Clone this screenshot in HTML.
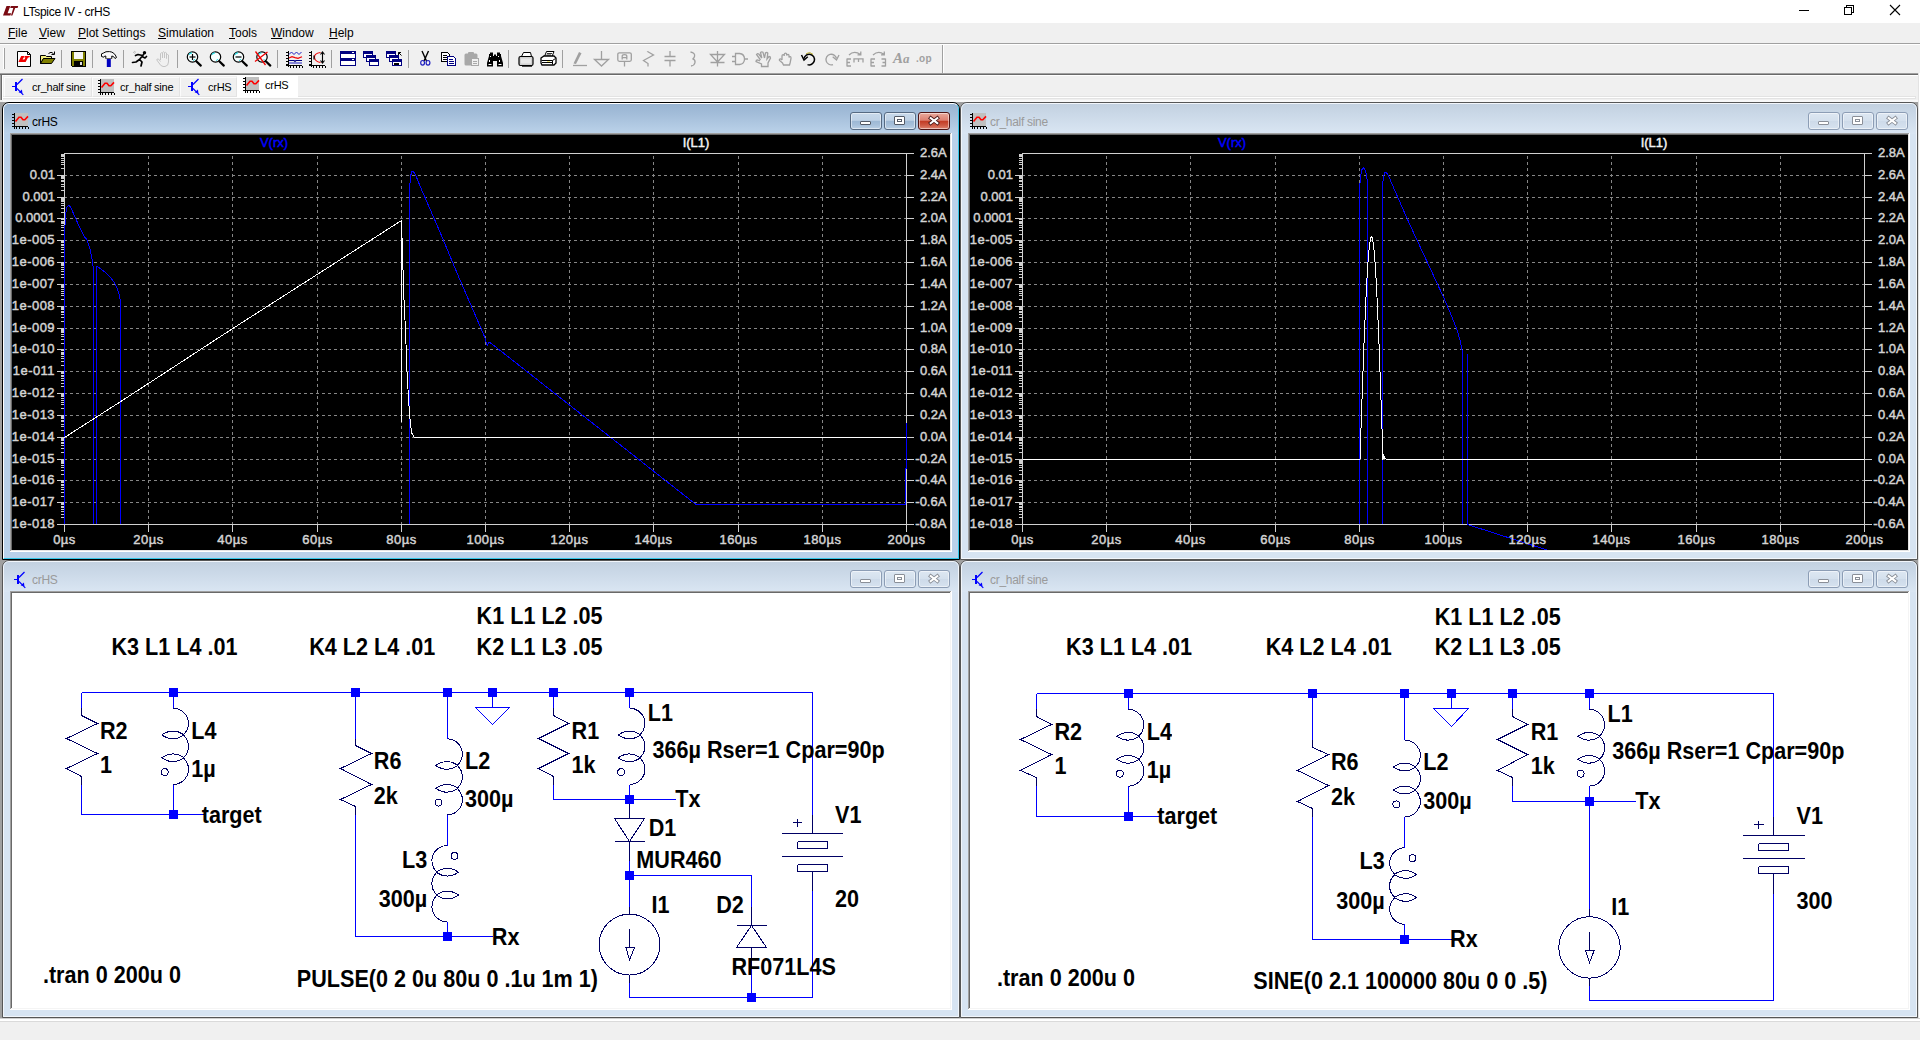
<!DOCTYPE html><html><head><meta charset="utf-8"><title>LTspice IV - crHS</title><style>
*{box-sizing:border-box;margin:0;padding:0}
html,body{width:1920px;height:1040px;overflow:hidden;background:#f0f0f0;font-family:"Liberation Sans",sans-serif;}
.abs{position:absolute}
.t{position:absolute;white-space:pre;line-height:1;}
.ui{font-size:12px;color:#000;}
.tab{font-size:11px;color:#000;letter-spacing:-0.25px}
.sch{font-size:21.4px;font-weight:bold;color:#000;transform:scaleY(1.07);transform-origin:50% 48%}
.pl{font-size:13px;font-weight:normal;color:#d4d4d4;-webkit-text-stroke:0.45px #d4d4d4}
u{text-decoration:underline;text-underline-offset:1px}
svg{position:absolute;left:0;top:0;overflow:visible}
</style></head><body>
<div class="abs" style="left:0px;top:0px;width:1920px;height:23px;background:#ffffff;"></div>
<svg width="1920" height="23" style="left:0;top:0"><g fill="#7a0a12"><path d="M6.5,6 L10.3,6 L7.6,13.2 L11.2,13.2 L10.4,15.6 L3,15.6 Z"/><path d="M10.8,6 L18.2,6 L17.6,8 L15.2,8 L12.4,15.6 L10.9,15.6 L11.6,13.6 L13.3,8 L10.2,8 Z"/></g><g stroke="#000" stroke-width="1" fill="none" shape-rendering="crispEdges"><path d="M1799,10.5 H1809"/><path d="M1844.5,7.5 H1851.5 V14.5 H1844.5 Z"/><path d="M1846.5,7.5 V5.5 H1853.5 V12.5 H1851.5"/></g><g stroke="#000" stroke-width="1.1" fill="none"><path d="M1890,5 L1900,15 M1900,5 L1890,15"/></g></svg>
<div class="t ui" style="left:23px;top:6px;letter-spacing:-0.28px">LTspice IV - crHS</div>
<div class="abs" style="left:0px;top:23px;width:1920px;height:20px;background:#f0f0f0;"></div>
<div class="t ui" style="left:8px;top:27px;"><u>F</u>ile</div>
<div class="t ui" style="left:39px;top:27px;"><u>V</u>iew</div>
<div class="t ui" style="left:78px;top:27px;"><u>P</u>lot Settings</div>
<div class="t ui" style="left:158px;top:27px;"><u>S</u>imulation</div>
<div class="t ui" style="left:229px;top:27px;"><u>T</u>ools</div>
<div class="t ui" style="left:271px;top:27px;"><u>W</u>indow</div>
<div class="t ui" style="left:329px;top:27px;"><u>H</u>elp</div>
<div class="abs" style="left:0px;top:43px;width:1920px;height:1px;background:#a0a0a0;"></div>
<div class="abs" style="left:0px;top:44px;width:1920px;height:1px;background:#ffffff;"></div>
<div class="abs" style="left:0px;top:45px;width:1920px;height:28px;background:#f0f0f0;"></div>
<div class="abs" style="left:0px;top:73px;width:1918px;height:1px;background:#a0a0a0;"></div>
<div class="abs" style="left:0px;top:74px;width:1918px;height:1px;background:#696969;"></div>
<div class="abs" style="left:3px;top:48px;width:1px;height:21px;background:#ffffff;"></div>
<div class="abs" style="left:4px;top:48px;width:1px;height:21px;background:#a0a0a0;"></div>
<div class="abs" style="left:61px;top:50px;width:1px;height:18px;background:#a0a0a0;"></div>
<div class="abs" style="left:92px;top:50px;width:1px;height:18px;background:#a0a0a0;"></div>
<div class="abs" style="left:123px;top:50px;width:1px;height:18px;background:#a0a0a0;"></div>
<div class="abs" style="left:177px;top:50px;width:1px;height:18px;background:#a0a0a0;"></div>
<div class="abs" style="left:277px;top:50px;width:1px;height:18px;background:#a0a0a0;"></div>
<div class="abs" style="left:331px;top:50px;width:1px;height:18px;background:#a0a0a0;"></div>
<div class="abs" style="left:408px;top:50px;width:1px;height:18px;background:#a0a0a0;"></div>
<div class="abs" style="left:508px;top:50px;width:1px;height:18px;background:#a0a0a0;"></div>
<div class="abs" style="left:562px;top:50px;width:1px;height:18px;background:#a0a0a0;"></div>
<div class="abs" style="left:942px;top:45px;width:1px;height:28px;background:#a0a0a0;"></div>
<div class="abs" style="left:943px;top:45px;width:1px;height:28px;background:#ffffff;"></div>
<svg width="1920" height="80"><g transform="translate(17,51)" ><path d="M0.5,0.5 H10.5 L13.5,3.5 V15.5 H0.5 Z" fill="#fff" stroke="#000"/><path d="M10.5,0.5 V3.5 H13.5" fill="none" stroke="#000"/><path d="M4.2,5 L7.6,5 L5.6,8.6 L8.2,8.6 L7,11 L1.4,11 Z" fill="#f00000"/><path d="M8,5 L13,5 L12.2,6.6 L11,6.6 L8.6,11 L6.2,11 L8.4,6.6 L7.2,6.6 Z" fill="#f00000"/></g><g transform="translate(40,51)" ><path d="M0.5,4.5 H5.5 L6.5,5.5 H11.5 V7.5 H3.5 L0.5,12.5 Z" fill="#f4f080" stroke="#000"/><path d="M0.5,12.5 L3.5,7.5 H15 L11.5,12.5 Z" fill="#808000" stroke="#000"/><path d="M8.5,2.5 Q11,0 13.5,2.5 M14.5,0.5 V3.5 H11.5" fill="none" stroke="#000"/></g><g transform="translate(71,51)" shape-rendering="crispEdges"><path d="M0.5,0.5 H14.5 V15.5 H1.5 L0.5,14.5 Z" fill="#808000" stroke="#000"/><rect x="3" y="1" width="9" height="7" fill="#f8f8f8"/><rect x="3" y="10" width="9" height="5" fill="#000"/><rect x="9" y="11" width="2" height="3" fill="#e0e0e0"/></g><g transform="translate(100,51)" ><path d="M1.5,5.5 Q0.5,2 3.5,2 Q5.5,0.2 9.5,0.6 Q14.5,1 16.5,6.5 L15,7.5 Q13.5,4.8 11.8,5 L11.8,7.5 L5.8,7.5 L5.8,5 Q4.5,4.6 3.8,6.2 Z" fill="#f8f8f8" stroke="#000" stroke-width="1"/><rect x="6.8" y="8" width="4" height="8" fill="#0000c0"/><path d="M6,7.5 H11.6" stroke="#606060"/></g><g transform="translate(132,51)" ><circle cx="12.5" cy="1.8" r="1.7" fill="#000"/><path d="M11.5,3.5 L7.5,8.5 M10.5,4.5 L6,3.5 L3.5,4.5 M10,5.5 L13,7 L14.5,5.5 M7.5,8.5 L4,11 L0.5,11.5 M7.5,8.5 L10,11 L9,15" fill="none" stroke="#000" stroke-width="1.7" stroke-linecap="round" stroke-linejoin="round"/><path d="M1,1 L3,2.5 M2,0 L4,1.5" stroke="#b0b0b0" stroke-width="0.8"/></g><g transform="translate(156,51)" ><path d="M4.5,9 V2.5 Q5.5,1 6.5,2.5 V7 V1.5 Q7.5,0 8.5,1.5 V7 V2 Q9.5,0.8 10.5,2 V7.5 V4 Q11.5,3 12.5,4 V11 Q12.5,15 9,15.5 H7 Q4.5,15 3,12 L0.8,9 Q0.8,7.5 2.5,8 L4.5,10.5" fill="none" stroke="#c4c4c4" stroke-width="1"/></g><circle cx="192.5" cy="57" r="5.2" fill="#f8ffff" stroke="#000" stroke-width="1.2"/><path d="M188.9,54.6 A4.2,4.2 0 0 1 192.0,52.8" stroke="#30e0e8" stroke-width="1.2" fill="none"/><path d="M195.1,59.0 A4.2,4.2 0 0 1 193.0,60.6" stroke="#30e0e8" stroke-width="1" fill="none"/><path d="M196.3,61.2 L200.8,65.6" stroke="#000" stroke-width="2.2" stroke-linecap="round"/><path d="M189.5,57 H195.5" stroke="#000" stroke-width="1.2"/><path d="M192.5,54 V60" stroke="#000" stroke-width="1.2"/><circle cx="215.5" cy="57" r="5.2" fill="#f8ffff" stroke="#000" stroke-width="1.2"/><path d="M211.9,54.6 A4.2,4.2 0 0 1 215.0,52.8" stroke="#30e0e8" stroke-width="1.2" fill="none"/><path d="M218.1,59.0 A4.2,4.2 0 0 1 216.0,60.6" stroke="#30e0e8" stroke-width="1" fill="none"/><path d="M219.3,61.2 L223.8,65.6" stroke="#000" stroke-width="2.2" stroke-linecap="round"/><circle cx="238.5" cy="57" r="5.2" fill="#f8ffff" stroke="#000" stroke-width="1.2"/><path d="M234.9,54.6 A4.2,4.2 0 0 1 238.0,52.8" stroke="#30e0e8" stroke-width="1.2" fill="none"/><path d="M241.1,59.0 A4.2,4.2 0 0 1 239.0,60.6" stroke="#30e0e8" stroke-width="1" fill="none"/><path d="M242.3,61.2 L246.8,65.6" stroke="#000" stroke-width="2.2" stroke-linecap="round"/><path d="M235.5,57 H241.5" stroke="#000" stroke-width="1.2"/><circle cx="262" cy="57" r="5.2" fill="#f8ffff" stroke="#000" stroke-width="1.2"/><path d="M258.4,54.6 A4.2,4.2 0 0 1 261.5,52.8" stroke="#30e0e8" stroke-width="1.2" fill="none"/><path d="M264.6,59.0 A4.2,4.2 0 0 1 262.5,60.6" stroke="#30e0e8" stroke-width="1" fill="none"/><path d="M265.8,61.2 L270.3,65.6" stroke="#000" stroke-width="2.2" stroke-linecap="round"/><path d="M255.5,51.5 L265.5,65 M267.5,52 L255,61.5" stroke="#f00000" stroke-width="1.3"/><g transform="translate(286,51)" ><g shape-rendering="crispEdges"><rect x="2" y="0" width="1" height="16" fill="#000"/><rect x="0" y="14" width="16" height="1" fill="#000"/><rect x="0" y="1" width="2" height="1" fill="#000"/><rect x="0" y="4" width="2" height="1" fill="#000"/><rect x="0" y="7" width="2" height="1" fill="#000"/><rect x="0" y="10" width="2" height="1" fill="#000"/><rect x="0" y="13" width="2" height="1" fill="#000"/><rect x="4" y="15" width="1" height="1.5" fill="#000"/><rect x="7" y="15" width="1" height="1.5" fill="#000"/><rect x="10" y="15" width="1" height="1.5" fill="#000"/><rect x="13" y="15" width="1" height="1.5" fill="#000"/><rect x="16" y="15" width="1" height="1.5" fill="#000"/></g><path d="M3,3.5 L5.5,1 L8,3.5 L10.5,1 L13,3.5 L15.5,1" fill="none" stroke="#2020c0" stroke-width="1"/><path d="M3,7 L6,5.6 L9,6.6 L12,7.4 L16,5.8" fill="none" stroke="#f00000" stroke-width="1.2"/><path d="M3,9.5 H8 L9,10.5 L10,9.5 H16" fill="none" stroke="#000080" stroke-width="1.1"/><path d="M3,12 H16" stroke="#2020c0" stroke-width="1"/></g><g transform="translate(309,51)" ><g shape-rendering="crispEdges"><rect x="2" y="0" width="1" height="16" fill="#000"/><rect x="0" y="14" width="16" height="1" fill="#000"/><rect x="0" y="1" width="2" height="1" fill="#000"/><rect x="0" y="4" width="2" height="1" fill="#000"/><rect x="0" y="7" width="2" height="1" fill="#000"/><rect x="0" y="10" width="2" height="1" fill="#000"/><rect x="0" y="13" width="2" height="1" fill="#000"/><rect x="4" y="15" width="1" height="1.5" fill="#000"/><rect x="7" y="15" width="1" height="1.5" fill="#000"/><rect x="10" y="15" width="1" height="1.5" fill="#000"/><rect x="13" y="15" width="1" height="1.5" fill="#000"/><rect x="16" y="15" width="1" height="1.5" fill="#000"/></g><path d="M11.5,1.5 Q5,2.5 5.5,6.5 Q6,10.5 11.5,11.5" fill="none" stroke="#f00000" stroke-width="1.1"/><path d="M13.5,1.5 V11.5 M11.5,3.5 L13.5,1 L15.5,3.5 M11.5,9.5 L13.5,12 L15.5,9.5" fill="none" stroke="#000" stroke-width="1.1"/><path d="M5,4.5 V8.5" stroke="#000" stroke-width="1.2"/></g><g transform="translate(340,51)" shape-rendering="crispEdges"><rect x="0.5" y="0.5" width="15" height="7" fill="#fff" stroke="#000080"/><rect x="1" y="1" width="14" height="2" fill="#000080"/><rect x="0.5" y="7.5" width="15" height="7" fill="#fff" stroke="#000080"/><rect x="1" y="8" width="14" height="2" fill="#000080"/><rect x="12" y="1" width="2" height="1" fill="#fff"/><rect x="12" y="8" width="2" height="1" fill="#fff"/></g><g transform="translate(363,51)" shape-rendering="crispEdges"><rect x="0.5" y="0.5" width="9" height="6" fill="#fff" stroke="#000080"/><rect x="1" y="1" width="8" height="2" fill="#000080"/><rect x="3.5" y="4.5" width="9" height="6" fill="#fff" stroke="#000080"/><rect x="4" y="5" width="8" height="2" fill="#000080"/><rect x="6.5" y="8.5" width="9" height="6" fill="#fff" stroke="#000080"/><rect x="7" y="9" width="8" height="2" fill="#000080"/></g><g transform="translate(386,51)" shape-rendering="crispEdges"><rect x="0.5" y="0.5" width="9" height="6" fill="#fff" stroke="#000080"/><rect x="1" y="1" width="8" height="2" fill="#000080"/><rect x="3.5" y="4.5" width="9" height="6" fill="#fff" stroke="#000080"/><rect x="4" y="5" width="8" height="2" fill="#000080"/><rect x="6.5" y="8.5" width="9" height="6" fill="#fff" stroke="#000080"/><rect x="7" y="9" width="8" height="2" fill="#000080"/><rect x="8" y="12" width="5" height="1.5" fill="#000"/></g><g transform="translate(386,51)" ><path d="M15.5,4.5 L12.5,1.5 M12.5,4 V1.5 H15" fill="none" stroke="#000" stroke-width="1"/></g><g transform="translate(420,51)" ><path d="M2,0 L6.5,10 M8.5,0 L4,10" stroke="#000" stroke-width="1.4" fill="none"/><ellipse cx="2.6" cy="11.8" rx="1.9" ry="2.3" fill="none" stroke="#2020c0" stroke-width="1.2"/><ellipse cx="8" cy="11.8" rx="1.9" ry="2.3" fill="none" stroke="#2020c0" stroke-width="1.2"/></g><g transform="translate(441,51)" shape-rendering="crispEdges"><path d="M0.5,1.5 H6.5 L8.5,3.5 V10.5 H0.5 Z" fill="#fff" stroke="#000"/><path d="M2,4.5 H6 M2,6.5 H7 M2,8.5 H7" stroke="#000"/><path d="M6.5,5.5 H12.5 L14.5,7.5 V14.5 H6.5 Z" fill="#fff" stroke="#000080"/><path d="M8,8.5 H12 M8,10.5 H13 M8,12.5 H13" stroke="#000080"/></g><g transform="translate(464,51)" ><rect x="0.5" y="2.5" width="13" height="12" rx="1.5" fill="#a8a8a8"/><rect x="4" y="1" width="6" height="3" rx="1" fill="#a8a8a8"/><rect x="7.5" y="7.5" width="7" height="7" fill="#f0f0f0" stroke="#a8a8a8"/><path d="M9,10.5 H13 M9,12.5 H13" stroke="#a8a8a8"/></g><g transform="translate(487,51)" ><path d="M2,3 H6 V5 H7 V3.5 H9 V5 H10 V3 H14 V5 L16,12 V15.5 H10 V10 H6 V15.5 H0 V12 L2,5 Z" fill="#000"/><rect x="3" y="1.5" width="3" height="2" fill="#000"/><rect x="10" y="1.5" width="3" height="2" fill="#000"/><rect x="3" y="5" width="1" height="1" fill="#fff"/><rect x="11" y="5" width="1" height="1" fill="#fff"/><rect x="2" y="9" width="1" height="2" fill="#fff"/><rect x="12" y="9" width="1" height="2" fill="#fff"/><rect x="1.5" y="13" width="3" height="1" fill="#fff"/><rect x="11.5" y="13" width="3" height="1" fill="#fff"/></g><g transform="translate(518,51)" ><path d="M3.5,5.5 L5.5,1.5 H12.5 L13.5,5.5" fill="#fff" stroke="#000"/><rect x="1" y="5.5" width="14" height="9" rx="1.5" fill="#d0d0d0" stroke="#000" stroke-width="1.2"/><rect x="3" y="7.5" width="10" height="5" fill="#e8e8e8"/><path d="M4,15 H14" stroke="#000" stroke-width="1.4"/></g><g transform="translate(540,51)" ><path d="M4.5,5.5 L6.5,0.5 H14 L12,5.5 Z" fill="#fff" stroke="#000"/><path d="M7,2.5 H12 M6.5,4 H11" stroke="#000" stroke-width="0.8"/><path d="M1,7 L4,5 H14 L16,7 V12 L14,14 H2 L1,12 Z" fill="#fff" stroke="#000" stroke-width="1.3"/><path d="M1.5,9.5 H12.5 L15.5,7.5 M12.5,9.5 V13.5" stroke="#000" fill="none"/><rect x="7" y="10.5" width="3" height="1.5" fill="#e8d800"/><path d="M2,11.5 H12" stroke="#000"/></g><g transform="translate(572,51)" ><path d="M1,14.5 H15" stroke="#a0a0a0" fill="none" stroke-width="1.3"/><path d="M1.5,12.5 L7,1 L9.5,2.2 L4,13 Z" fill="#a0a0a0"/></g><g transform="translate(594,51)" ><path d="M7.5,0 V8 M0.5,8.5 H14.5 L7.5,15 Z" stroke="#a0a0a0" fill="none" stroke-width="1.3"/></g><g transform="translate(617,51)" ><rect x="0.8" y="1.8" width="13.5" height="8.5" rx="1.5" stroke="#a0a0a0" fill="none" stroke-width="1.3"/><path d="M7.5,10.5 V15.5" stroke="#a0a0a0" fill="none" stroke-width="1.3"/><path d="M5.2,8.5 V5 Q5.2,3.6 7.5,3.6 Q9.8,3.6 9.8,5 V8.5 M5.2,6.6 H9.8" stroke="#a0a0a0" fill="none" stroke-width="1.3" stroke-width="1.4"/></g><g transform="translate(642,51)" ><path d="M5.5,0.5 L11.5,4 L1.5,9.5 L6,12.5 V15.5" stroke="#a0a0a0" fill="none" stroke-width="1.3"/><path d="M5.5,0.5 V1" stroke="#a0a0a0" fill="none" stroke-width="1.3"/></g><g transform="translate(664,51)" ><path d="M6,0 V5.5 M0.5,5.5 H11.5 M0.5,9.5 H11.5 M6,9.5 V15.5" stroke="#a0a0a0" fill="none" stroke-width="1.3" stroke-width="1.4"/></g><g transform="translate(689,51)" ><path d="M1.5,1 Q6.5,2 5.5,5.5 Q5,7.5 3.5,7.8 Q6.5,8.5 6,11.5 Q5.5,14.5 2,15" stroke="#a0a0a0" fill="none" stroke-width="1.3" stroke-width="1.4"/></g><g transform="translate(710,51)" ><path d="M7.5,0 V15.5 M0.5,3.5 H14.5 L7.5,11 Z M0.5,11.5 H14.5" stroke="#a0a0a0" fill="none" stroke-width="1.3"/></g><g transform="translate(732,51)" ><path d="M0,5.5 H3.5 M0,10.5 H3.5 M3.5,2.5 H7.5 Q12.5,3 12.5,8 Q12.5,13 7.5,13.5 H3.5 Z M12.5,8 H16" stroke="#a0a0a0" fill="none" stroke-width="1.3" stroke-width="1.5"/></g><g transform="translate(755,51)" ><path d="M5.5,9 L1.5,3.5 Q2.5,2 3.8,3 L6.8,7 L5.5,1.5 Q6.8,0.3 8,1.3 L9.5,7 L10.5,1.8 Q12,1 12.8,2.2 L12,8 L14,5.5 Q15.5,5.5 15.5,7 L13,12 V15.5 H6.5 V13 L1,10.5 Q1,9 2.5,9 L5,10" stroke="#a0a0a0" fill="none" stroke-width="1.3" stroke-width="1"/></g><g transform="translate(778,51)" ><path d="M4,9 V5 Q4,3.6 5.2,3.6 Q6.2,3.6 6.2,5 V3.5 Q6.4,2.2 7.5,2.2 Q8.6,2.2 8.7,3.5 V4.5 Q9,3.2 10,3.3 Q11,3.4 11,4.8 V6.5 Q11.4,5.4 12.3,5.6 Q13.2,5.8 13,7.5 L12.2,11.5 L11.5,14 H5.5 L4.5,12 L1.5,9.5 Q1,7.8 2.5,7.8 L4,9" stroke="#a0a0a0" fill="none" stroke-width="1.3" stroke-width="1.1"/></g><g transform="translate(801,51)" ><path d="M3,7.5 A5.3,5.3 0 1 1 6.5,13.6" fill="none" stroke="#000" stroke-width="1.5"/><path d="M0.5,4 L3,9 L6.8,5.8" fill="none" stroke="#000" stroke-width="1.5"/><path d="M5.2,2.6 A5.3,5.3 0 0 1 12,3.4" fill="none" stroke="#b0a000" stroke-width="0.8"/></g><g transform="translate(824,51)" ><path d="M12.5,7.5 A5.3,5.3 0 1 0 9,13.6" stroke="#a0a0a0" fill="none" stroke-width="1.3"/><path d="M15,4 L12.5,9 L8.7,5.8" stroke="#a0a0a0" fill="none" stroke-width="1.3"/></g><g transform="translate(846,51)" ><path d="M1,15.5 V7.5 M1,8 H5 M1,11.5 H4 M1,15 H5" stroke="#a0a0a0" fill="none" stroke-width="1.3" stroke-width="1.5"/><path d="M8,11.5 V7.8 H17 V11.5 M12.5,8 V11" stroke="#a0a0a0" fill="none" stroke-width="1.3" stroke-width="1.5"/><path d="M3,4 Q8,-1 14.5,3.5 M14.8,0.5 V3.8 H11.5" stroke="#a0a0a0" fill="none" stroke-width="1.3" stroke-width="1"/></g><g transform="translate(870,51)" ><path d="M1,15.5 V7.5 M1,8 H5 M1,11.5 H4 M1,15 H5" stroke="#a0a0a0" fill="none" stroke-width="1.3" stroke-width="1.5"/><path d="M15.5,15.5 V7.5 M15.5,8 H11.5 M15.5,11.5 H12.5 M15.5,15 H11.5" stroke="#a0a0a0" fill="none" stroke-width="1.3" stroke-width="1.5"/><path d="M3,4 Q8.5,-1 14,3.5 M14.3,0.5 V3.8 H11" stroke="#a0a0a0" fill="none" stroke-width="1.3" stroke-width="1"/></g></svg>
<div class="t ui" style="left:893px;top:51px;font-family:'Liberation Serif',serif;font-style:italic;font-weight:bold;font-size:15px;color:#a0a0a0">A<span style="font-size:13px">a</span></div>
<div class="t ui" style="left:916px;top:54px;font-weight:bold;font-size:10px;color:#a0a0a0;letter-spacing:0.3px">.op</div>
<div class="abs" style="left:0px;top:75px;width:1920px;height:25px;background:#f0f0f0;"></div>
<div class="abs" style="left:0px;top:75px;width:1918px;height:1px;background:#ffffff;"></div>
<div class="abs" style="left:0px;top:75px;width:1px;height:25px;background:#a0a0a0;"></div>
<div class="abs" style="left:1px;top:75px;width:1px;height:25px;background:#696969;"></div>
<div class="abs" style="left:2px;top:75px;width:1px;height:25px;background:#ffffff;"></div>
<div class="abs" style="left:3px;top:96px;width:1913px;height:3px;background:#e3e3e3;"></div>
<div class="abs" style="left:3px;top:97px;width:1912px;height:1px;background:#ffffff;"></div>
<div class="abs" style="left:3px;top:100px;width:1915px;height:2px;background:#f8f8f8;"></div>
<div class="abs" style="left:1918px;top:73px;width:1px;height:945px;background:#e3e3e3;"></div>
<div class="abs" style="left:1919px;top:73px;width:1px;height:945px;background:#ffffff;"></div>
<div class="abs" style="left:4px;top:77px;width:88px;height:20px;background:#f0f0f0;border:1px solid #e3e3e3;border-left-color:#fbfbfb;border-top-color:#fbfbfb"></div>
<div class="t tab" style="left:32px;top:82px;">cr_half sine</div>
<div class="abs" style="left:92px;top:77px;width:88px;height:20px;background:#f0f0f0;border:1px solid #e3e3e3;border-left-color:#fbfbfb;border-top-color:#fbfbfb"></div>
<div class="t tab" style="left:120px;top:82px;">cr_half sine</div>
<div class="abs" style="left:180px;top:77px;width:57px;height:20px;background:#f0f0f0;border:1px solid #e3e3e3;border-left-color:#fbfbfb;border-top-color:#fbfbfb"></div>
<div class="t tab" style="left:208px;top:82px;">crHS</div>
<div class="abs" style="left:237px;top:76px;width:61px;height:22px;background:#ffffff;"></div>
<div class="t tab" style="left:265px;top:80px;">crHS</div>
<svg width="1920" height="1040"><g transform="translate(12,79)" fill="#0000ff" shape-rendering="crispEdges"><rect x="0" y="7" width="4" height="1"/><rect x="3" y="3" width="2" height="9"/></g><g transform="translate(12,79)" stroke="#0000ff" fill="#0000ff"><path d="M5,5.5 L10.5,0" stroke-width="1.15"/><path d="M5,9.5 L11.3,15.8" stroke-width="1.15"/><path d="M6.6,13.6 L9.9,10.4 L10.4,14.1 Z" stroke="none"/></g><g transform="translate(98,79)" shape-rendering="crispEdges"><rect x="3" y="0" width="13" height="13" fill="#c0c0c0"/><rect x="2" y="0" width="1" height="16" fill="#000"/><rect x="0" y="13" width="16" height="1" fill="#000"/><rect x="0" y="1" width="2" height="1" fill="#000"/><rect x="0" y="4" width="2" height="1" fill="#000"/><rect x="0" y="7" width="2" height="1" fill="#000"/><rect x="0" y="10" width="2" height="1" fill="#000"/><rect x="0" y="13" width="2" height="1" fill="#000"/><rect x="4" y="14" width="1" height="2" fill="#000"/><rect x="7" y="14" width="1" height="2" fill="#000"/><rect x="10" y="14" width="1" height="2" fill="#000"/><rect x="13" y="14" width="1" height="2" fill="#000"/><rect x="16" y="14" width="1" height="2" fill="#000"/></g><g transform="translate(98,79)"><path d="M3.5,8.5 L7,4.2 L9,4.2 L11,6.8 L12.8,6.8 L16,3.4" stroke="#ff0000" stroke-width="1.6" fill="none"/></g><g transform="translate(188,79)" fill="#0000ff" shape-rendering="crispEdges"><rect x="0" y="7" width="4" height="1"/><rect x="3" y="3" width="2" height="9"/></g><g transform="translate(188,79)" stroke="#0000ff" fill="#0000ff"><path d="M5,5.5 L10.5,0" stroke-width="1.15"/><path d="M5,9.5 L11.3,15.8" stroke-width="1.15"/><path d="M6.6,13.6 L9.9,10.4 L10.4,14.1 Z" stroke="none"/></g><g transform="translate(243,77)" shape-rendering="crispEdges"><rect x="3" y="0" width="13" height="13" fill="#c0c0c0"/><rect x="2" y="0" width="1" height="16" fill="#000"/><rect x="0" y="13" width="16" height="1" fill="#000"/><rect x="0" y="1" width="2" height="1" fill="#000"/><rect x="0" y="4" width="2" height="1" fill="#000"/><rect x="0" y="7" width="2" height="1" fill="#000"/><rect x="0" y="10" width="2" height="1" fill="#000"/><rect x="0" y="13" width="2" height="1" fill="#000"/><rect x="4" y="14" width="1" height="2" fill="#000"/><rect x="7" y="14" width="1" height="2" fill="#000"/><rect x="10" y="14" width="1" height="2" fill="#000"/><rect x="13" y="14" width="1" height="2" fill="#000"/><rect x="16" y="14" width="1" height="2" fill="#000"/></g><g transform="translate(243,77)"><path d="M3.5,8.5 L7,4.2 L9,4.2 L11,6.8 L12.8,6.8 L16,3.4" stroke="#ff0000" stroke-width="1.6" fill="none"/></g></svg>
<div class="abs" style="left:0px;top:102px;width:1918px;height:916px;background:#a0a0a0;"></div>
<div class="abs" style="left:0px;top:1018px;width:1920px;height:22px;background:#f0f0f0;"></div>
<div class="abs" style="left:0px;top:1018px;width:1920px;height:1px;background:#d0d0d0;"></div>
<div class="abs" style="left:0px;top:1019px;width:1920px;height:2px;background:#ffffff;"></div>
<div class="abs" style="left:0px;top:1021px;width:1920px;height:1px;background:#dadada;"></div>
<div class="abs" style="left:2px;top:102px;width:958px;height:458px;background:#b9d1ea;border:1px solid #000000;border-radius:7px 7px 0 0;overflow:hidden"><div class="abs" style="left:0;top:0;width:956px;height:456px;border:1px solid #ffffff;border-radius:6px 6px 0 0;border-right-color:#35c6e8;border-bottom-color:#35c6e8;"></div><div class="abs" style="left:1px;top:1px;width:954px;height:30px;background:linear-gradient(#98b4d2 0px,#a3bdd9 10px,#bcd3ea 30px,#b9d1ea 31px);border-radius:5px 5px 0 0"></div></div>
<div class="abs" style="left:10px;top:133px;width:942px;height:419px;background:#ffffff;"></div>
<div class="abs" style="left:10px;top:133px;width:941px;height:418px;background:#a0a0a0;"></div>
<div class="abs" style="left:11px;top:134px;width:940px;height:417px;background:#e3e3e3;"></div>
<div class="abs" style="left:11px;top:134px;width:939px;height:416px;background:#696969;"></div>
<div class="abs" style="left:12px;top:135px;width:938px;height:415px;background:#000000;"></div>
<svg width="1920" height="1040"><g transform="translate(12,113)" shape-rendering="crispEdges"><rect x="3" y="0" width="13" height="13" fill="#c0c0c0"/><rect x="2" y="0" width="1" height="16" fill="#000"/><rect x="0" y="13" width="16" height="1" fill="#000"/><rect x="0" y="1" width="2" height="1" fill="#000"/><rect x="0" y="4" width="2" height="1" fill="#000"/><rect x="0" y="7" width="2" height="1" fill="#000"/><rect x="0" y="10" width="2" height="1" fill="#000"/><rect x="0" y="13" width="2" height="1" fill="#000"/><rect x="4" y="14" width="1" height="2" fill="#000"/><rect x="7" y="14" width="1" height="2" fill="#000"/><rect x="10" y="14" width="1" height="2" fill="#000"/><rect x="13" y="14" width="1" height="2" fill="#000"/><rect x="16" y="14" width="1" height="2" fill="#000"/></g><g transform="translate(12,113)"><path d="M3.5,8.5 L7,4.2 L9,4.2 L11,6.8 L12.8,6.8 L16,3.4" stroke="#ff0000" stroke-width="1.6" fill="none"/></g></svg>
<div class="t ui" style="left:32px;top:116px;color:#000;letter-spacing:-0.3px">crHS</div>
<div class="abs" style="left:850px;top:112px;width:32px;height:18px;border:1px solid #566a82;border-radius:3px;background:linear-gradient(#c8d9ea 0%,#bfd2e6 46%,#9db8d4 50%,#a7c0da 75%,#bcd1e6 100%);box-shadow:inset 0 0 0 1px rgba(255,255,255,0.5)"></div>
<div class="abs" style="left:884px;top:112px;width:32px;height:18px;border:1px solid #566a82;border-radius:3px;background:linear-gradient(#c8d9ea 0%,#bfd2e6 46%,#9db8d4 50%,#a7c0da 75%,#bcd1e6 100%);box-shadow:inset 0 0 0 1px rgba(255,255,255,0.5)"></div>
<div class="abs" style="left:918px;top:112px;width:32px;height:18px;border:1px solid #4d1414;border-radius:3px;background:linear-gradient(#e9a99c 0%,#dc7f70 46%,#c23a24 50%,#cd5640 75%,#dd8370 100%);box-shadow:inset 0 0 0 1px rgba(255,255,255,0.5)"></div>
<svg width="1920" height="1040"><rect x="860.5" y="121.5" width="10" height="3" fill="#fff" stroke="#535a66" rx="0.5"/><rect x="894.5" y="116.5" width="10" height="8" fill="#fff" stroke="#535a66" rx="0.5"/><rect x="897.5" y="119.5" width="4" height="2" fill="none" stroke="#535a66"/><path d="M930.7,118.1 L937.3,123.1 M937.3,118.1 L930.7,123.1" stroke="#4a1a1a" stroke-width="3.8" stroke-linecap="square"/><path d="M930.7,118.1 L937.3,123.1 M937.3,118.1 L930.7,123.1" stroke="#fff" stroke-width="2.0" stroke-linecap="square"/></svg>
<div class="abs" style="left:960px;top:102px;width:958px;height:458px;background:#d7e4f2;border:1px solid #565656;border-radius:7px 7px 0 0;overflow:hidden"><div class="abs" style="left:0;top:0;width:956px;height:456px;border:1px solid #f2f6fb;border-radius:6px 6px 0 0;"></div><div class="abs" style="left:1px;top:1px;width:954px;height:30px;background:linear-gradient(#c3d1e0 0px,#cad8e7 10px,#dae6f3 30px,#d7e4f2 31px);border-radius:5px 5px 0 0"></div></div>
<div class="abs" style="left:968px;top:133px;width:942px;height:419px;background:#ffffff;"></div>
<div class="abs" style="left:968px;top:133px;width:941px;height:418px;background:#a0a0a0;"></div>
<div class="abs" style="left:969px;top:134px;width:940px;height:417px;background:#e3e3e3;"></div>
<div class="abs" style="left:969px;top:134px;width:939px;height:416px;background:#696969;"></div>
<div class="abs" style="left:970px;top:135px;width:938px;height:415px;background:#000000;"></div>
<svg width="1920" height="1040"><g transform="translate(970,113)" shape-rendering="crispEdges"><rect x="3" y="0" width="13" height="13" fill="#c0c0c0"/><rect x="2" y="0" width="1" height="16" fill="#000"/><rect x="0" y="13" width="16" height="1" fill="#000"/><rect x="0" y="1" width="2" height="1" fill="#000"/><rect x="0" y="4" width="2" height="1" fill="#000"/><rect x="0" y="7" width="2" height="1" fill="#000"/><rect x="0" y="10" width="2" height="1" fill="#000"/><rect x="0" y="13" width="2" height="1" fill="#000"/><rect x="4" y="14" width="1" height="2" fill="#000"/><rect x="7" y="14" width="1" height="2" fill="#000"/><rect x="10" y="14" width="1" height="2" fill="#000"/><rect x="13" y="14" width="1" height="2" fill="#000"/><rect x="16" y="14" width="1" height="2" fill="#000"/></g><g transform="translate(970,113)"><path d="M3.5,8.5 L7,4.2 L9,4.2 L11,6.8 L12.8,6.8 L16,3.4" stroke="#ff0000" stroke-width="1.6" fill="none"/></g></svg>
<div class="t ui" style="left:990px;top:116px;color:#9a9a9a;letter-spacing:-0.3px">cr_half sine</div>
<div class="abs" style="left:1808px;top:112px;width:32px;height:18px;border:1px solid #8c9db5;border-radius:3px;background:linear-gradient(#dde7f2 0%,#d4e0ed 50%,#cddae9 51%,#d6e2ef 100%);box-shadow:inset 0 0 0 1px rgba(255,255,255,0.5)"></div>
<div class="abs" style="left:1842px;top:112px;width:32px;height:18px;border:1px solid #8c9db5;border-radius:3px;background:linear-gradient(#dde7f2 0%,#d4e0ed 50%,#cddae9 51%,#d6e2ef 100%);box-shadow:inset 0 0 0 1px rgba(255,255,255,0.5)"></div>
<div class="abs" style="left:1876px;top:112px;width:32px;height:18px;border:1px solid #8c9db5;border-radius:3px;background:linear-gradient(#dde7f2 0%,#d4e0ed 50%,#cddae9 51%,#d6e2ef 100%);box-shadow:inset 0 0 0 1px rgba(255,255,255,0.5)"></div>
<svg width="1920" height="1040"><rect x="1818.5" y="121.5" width="10" height="3" fill="#fff" stroke="#8a8f98" rx="0.5"/><rect x="1852.5" y="116.5" width="10" height="8" fill="#fff" stroke="#8a8f98" rx="0.5"/><rect x="1855.5" y="119.5" width="4" height="2" fill="none" stroke="#8a8f98"/><path d="M1888.7,118.1 L1895.3,123.1 M1895.3,118.1 L1888.7,123.1" stroke="#8a8f98" stroke-width="3.8" stroke-linecap="square"/><path d="M1888.7,118.1 L1895.3,123.1 M1895.3,118.1 L1888.7,123.1" stroke="#fff" stroke-width="2.0" stroke-linecap="square"/></svg>
<div class="abs" style="left:2px;top:560px;width:958px;height:458px;background:#d7e4f2;border:1px solid #565656;border-radius:7px 7px 0 0;overflow:hidden"><div class="abs" style="left:0;top:0;width:956px;height:456px;border:1px solid #f2f6fb;border-radius:6px 6px 0 0;"></div><div class="abs" style="left:1px;top:1px;width:954px;height:30px;background:linear-gradient(#c3d1e0 0px,#cad8e7 10px,#dae6f3 30px,#d7e4f2 31px);border-radius:5px 5px 0 0"></div></div>
<div class="abs" style="left:10px;top:591px;width:942px;height:419px;background:#ffffff;"></div>
<div class="abs" style="left:10px;top:591px;width:941px;height:418px;background:#a0a0a0;"></div>
<div class="abs" style="left:11px;top:592px;width:940px;height:417px;background:#f4f4f4;"></div>
<div class="abs" style="left:11px;top:592px;width:939px;height:416px;background:#696969;"></div>
<div class="abs" style="left:12px;top:593px;width:938px;height:415px;background:#ffffff;"></div>
<svg width="1920" height="1040"><g transform="translate(14,572)" fill="#0000ff" shape-rendering="crispEdges"><rect x="0" y="7" width="4" height="1"/><rect x="3" y="3" width="2" height="9"/></g><g transform="translate(14,572)" stroke="#0000ff" fill="#0000ff"><path d="M5,5.5 L10.5,0" stroke-width="1.15"/><path d="M5,9.5 L11.3,15.8" stroke-width="1.15"/><path d="M6.6,13.6 L9.9,10.4 L10.4,14.1 Z" stroke="none"/></g></svg>
<div class="t ui" style="left:32px;top:574px;color:#9a9a9a;letter-spacing:-0.3px">crHS</div>
<div class="abs" style="left:850px;top:570px;width:32px;height:18px;border:1px solid #8c9db5;border-radius:3px;background:linear-gradient(#dde7f2 0%,#d4e0ed 50%,#cddae9 51%,#d6e2ef 100%);box-shadow:inset 0 0 0 1px rgba(255,255,255,0.5)"></div>
<div class="abs" style="left:884px;top:570px;width:32px;height:18px;border:1px solid #8c9db5;border-radius:3px;background:linear-gradient(#dde7f2 0%,#d4e0ed 50%,#cddae9 51%,#d6e2ef 100%);box-shadow:inset 0 0 0 1px rgba(255,255,255,0.5)"></div>
<div class="abs" style="left:918px;top:570px;width:32px;height:18px;border:1px solid #8c9db5;border-radius:3px;background:linear-gradient(#dde7f2 0%,#d4e0ed 50%,#cddae9 51%,#d6e2ef 100%);box-shadow:inset 0 0 0 1px rgba(255,255,255,0.5)"></div>
<svg width="1920" height="1040"><rect x="860.5" y="579.5" width="10" height="3" fill="#fff" stroke="#8a8f98" rx="0.5"/><rect x="894.5" y="574.5" width="10" height="8" fill="#fff" stroke="#8a8f98" rx="0.5"/><rect x="897.5" y="577.5" width="4" height="2" fill="none" stroke="#8a8f98"/><path d="M930.7,576.1 L937.3,581.1 M937.3,576.1 L930.7,581.1" stroke="#8a8f98" stroke-width="3.8" stroke-linecap="square"/><path d="M930.7,576.1 L937.3,581.1 M937.3,576.1 L930.7,581.1" stroke="#fff" stroke-width="2.0" stroke-linecap="square"/></svg>
<div class="abs" style="left:960px;top:560px;width:958px;height:458px;background:#d7e4f2;border:1px solid #565656;border-radius:7px 7px 0 0;overflow:hidden"><div class="abs" style="left:0;top:0;width:956px;height:456px;border:1px solid #f2f6fb;border-radius:6px 6px 0 0;"></div><div class="abs" style="left:1px;top:1px;width:954px;height:30px;background:linear-gradient(#c3d1e0 0px,#cad8e7 10px,#dae6f3 30px,#d7e4f2 31px);border-radius:5px 5px 0 0"></div></div>
<div class="abs" style="left:968px;top:591px;width:942px;height:419px;background:#ffffff;"></div>
<div class="abs" style="left:968px;top:591px;width:941px;height:418px;background:#a0a0a0;"></div>
<div class="abs" style="left:969px;top:592px;width:940px;height:417px;background:#f4f4f4;"></div>
<div class="abs" style="left:969px;top:592px;width:939px;height:416px;background:#696969;"></div>
<div class="abs" style="left:970px;top:593px;width:938px;height:415px;background:#ffffff;"></div>
<svg width="1920" height="1040"><g transform="translate(972,572)" fill="#0000ff" shape-rendering="crispEdges"><rect x="0" y="7" width="4" height="1"/><rect x="3" y="3" width="2" height="9"/></g><g transform="translate(972,572)" stroke="#0000ff" fill="#0000ff"><path d="M5,5.5 L10.5,0" stroke-width="1.15"/><path d="M5,9.5 L11.3,15.8" stroke-width="1.15"/><path d="M6.6,13.6 L9.9,10.4 L10.4,14.1 Z" stroke="none"/></g></svg>
<div class="t ui" style="left:990px;top:574px;color:#9a9a9a;letter-spacing:-0.3px">cr_half sine</div>
<div class="abs" style="left:1808px;top:570px;width:32px;height:18px;border:1px solid #8c9db5;border-radius:3px;background:linear-gradient(#dde7f2 0%,#d4e0ed 50%,#cddae9 51%,#d6e2ef 100%);box-shadow:inset 0 0 0 1px rgba(255,255,255,0.5)"></div>
<div class="abs" style="left:1842px;top:570px;width:32px;height:18px;border:1px solid #8c9db5;border-radius:3px;background:linear-gradient(#dde7f2 0%,#d4e0ed 50%,#cddae9 51%,#d6e2ef 100%);box-shadow:inset 0 0 0 1px rgba(255,255,255,0.5)"></div>
<div class="abs" style="left:1876px;top:570px;width:32px;height:18px;border:1px solid #8c9db5;border-radius:3px;background:linear-gradient(#dde7f2 0%,#d4e0ed 50%,#cddae9 51%,#d6e2ef 100%);box-shadow:inset 0 0 0 1px rgba(255,255,255,0.5)"></div>
<svg width="1920" height="1040"><rect x="1818.5" y="579.5" width="10" height="3" fill="#fff" stroke="#8a8f98" rx="0.5"/><rect x="1852.5" y="574.5" width="10" height="8" fill="#fff" stroke="#8a8f98" rx="0.5"/><rect x="1855.5" y="577.5" width="4" height="2" fill="none" stroke="#8a8f98"/><path d="M1888.7,576.1 L1895.3,581.1 M1895.3,576.1 L1888.7,581.1" stroke="#8a8f98" stroke-width="3.8" stroke-linecap="square"/><path d="M1888.7,576.1 L1895.3,581.1 M1895.3,576.1 L1888.7,581.1" stroke="#fff" stroke-width="2.0" stroke-linecap="square"/></svg>
<svg width="938" height="415" style="left:12px;top:135px;overflow:hidden" viewBox="12 135 938 415"><g shape-rendering="crispEdges" fill="none"><path d="M148.5,154 V524 M232.5,154 V524 M317.5,154 V524 M401.5,154 V524 M485.5,154 V524 M569.5,154 V524 M653.5,154 V524 M738.5,154 V524 M822.5,154 V524 " stroke="#868686" stroke-dasharray="3 3" stroke-dashoffset="-2"/><path d="M65,175.5 H906 M65,197.5 H906 M65,218.5 H906 M65,240.5 H906 M65,262.5 H906 M65,284.5 H906 M65,306.5 H906 M65,328.5 H906 M65,349.5 H906 M65,371.5 H906 M65,393.5 H906 M65,415.5 H906 M65,437.5 H906 M65,459.5 H906 M65,480.5 H906 M65,502.5 H906 " stroke="#868686" stroke-dasharray="3 3" stroke-dashoffset="1"/><rect x="64.5" y="153.5" width="842" height="371" stroke="#d0d0d0"/><path d="M64.5,524 V532 M148.5,524 V532 M232.5,524 V532 M317.5,524 V532 M401.5,524 V532 M485.5,524 V532 M569.5,524 V532 M653.5,524 V532 M738.5,524 V532 M822.5,524 V532 M906.5,524 V532 M906,153.5 H914 M906,175.5 H914 M57,175.5 H64 M906,197.5 H914 M57,197.5 H64 M906,218.5 H914 M57,218.5 H64 M906,240.5 H914 M57,240.5 H64 M906,262.5 H914 M57,262.5 H64 M906,284.5 H914 M57,284.5 H64 M906,306.5 H914 M57,306.5 H64 M906,328.5 H914 M57,328.5 H64 M906,349.5 H914 M57,349.5 H64 M906,371.5 H914 M57,371.5 H64 M906,393.5 H914 M57,393.5 H64 M906,415.5 H914 M57,415.5 H64 M906,437.5 H914 M57,437.5 H64 M906,459.5 H914 M57,459.5 H64 M906,480.5 H914 M57,480.5 H64 M906,502.5 H914 M57,502.5 H64 M906,524.5 H914 M57,524.5 H64 M61,168.5 H64 M61,164.5 H64 M61,162.5 H64 M61,160.5 H64 M61,158.5 H64 M61,156.5 H64 M61,155.5 H64 M61,154.5 H64 M61,190.5 H64 M61,186.5 H64 M61,184.5 H64 M61,181.5 H64 M61,180.5 H64 M61,178.5 H64 M61,177.5 H64 M61,176.5 H64 M61,212.5 H64 M61,208.5 H64 M61,205.5 H64 M61,203.5 H64 M61,201.5 H64 M61,200.5 H64 M61,199.5 H64 M61,198.5 H64 M61,234.5 H64 M61,230.5 H64 M61,227.5 H64 M61,225.5 H64 M61,223.5 H64 M61,222.5 H64 M61,221.5 H64 M61,219.5 H64 M61,256.5 H64 M61,252.5 H64 M61,249.5 H64 M61,247.5 H64 M61,245.5 H64 M61,244.5 H64 M61,242.5 H64 M61,241.5 H64 M61,277.5 H64 M61,274.5 H64 M61,271.5 H64 M61,269.5 H64 M61,267.5 H64 M61,265.5 H64 M61,264.5 H64 M61,263.5 H64 M61,299.5 H64 M61,295.5 H64 M61,293.5 H64 M61,291.5 H64 M61,289.5 H64 M61,287.5 H64 M61,286.5 H64 M61,285.5 H64 M61,321.5 H64 M61,317.5 H64 M61,314.5 H64 M61,312.5 H64 M61,311.5 H64 M61,309.5 H64 M61,308.5 H64 M61,307.5 H64 M61,343.5 H64 M61,339.5 H64 M61,336.5 H64 M61,334.5 H64 M61,332.5 H64 M61,331.5 H64 M61,330.5 H64 M61,329.5 H64 M61,365.5 H64 M61,361.5 H64 M61,358.5 H64 M61,356.5 H64 M61,354.5 H64 M61,353.5 H64 M61,352.5 H64 M61,350.5 H64 M61,386.5 H64 M61,383.5 H64 M61,380.5 H64 M61,378.5 H64 M61,376.5 H64 M61,375.5 H64 M61,373.5 H64 M61,372.5 H64 M61,408.5 H64 M61,404.5 H64 M61,402.5 H64 M61,400.5 H64 M61,398.5 H64 M61,396.5 H64 M61,395.5 H64 M61,394.5 H64 M61,430.5 H64 M61,426.5 H64 M61,424.5 H64 M61,421.5 H64 M61,420.5 H64 M61,418.5 H64 M61,417.5 H64 M61,416.5 H64 M61,452.5 H64 M61,448.5 H64 M61,445.5 H64 M61,443.5 H64 M61,442.5 H64 M61,440.5 H64 M61,439.5 H64 M61,438.5 H64 M61,474.5 H64 M61,470.5 H64 M61,467.5 H64 M61,465.5 H64 M61,463.5 H64 M61,462.5 H64 M61,461.5 H64 M61,460.5 H64 M61,496.5 H64 M61,492.5 H64 M61,489.5 H64 M61,487.5 H64 M61,485.5 H64 M61,484.5 H64 M61,482.5 H64 M61,481.5 H64 M61,517.5 H64 M61,514.5 H64 M61,511.5 H64 M61,509.5 H64 M61,507.5 H64 M61,506.5 H64 M61,504.5 H64 M61,503.5 H64 " stroke="#d0d0d0"/></g><path d="M64.5,524.0 L64.5,236.0 L65.5,215.0 L67.0,207.0 L69.0,205.0 L71.0,208.0 L75.0,217.0 L80.0,228.0 L84.0,236.0 L87.0,240.0 L89.5,247.0 L91.5,256.0 L93.0,266.0 L93.5,275.0 L93.5,524.0" fill="none" stroke="#0000ff" stroke-width="1" stroke-linejoin="round" shape-rendering="crispEdges"/><path d="M96.5,524.0 L96.5,272.0 L97.0,266.0 L100.0,268.5 L105.0,272.0 L110.0,277.0 L114.0,282.0 L117.0,288.0 L119.0,294.0 L120.5,301.0 L120.5,524.0" fill="none" stroke="#0000ff" stroke-width="1" stroke-linejoin="round" shape-rendering="crispEdges"/><path d="M409.5,524.0 L409.5,190.0 L410.5,176.0 L412.0,171.5 L413.5,171.5 L416.0,176.0 L420.0,186.0 L440.0,232.0 L460.0,280.0 L480.0,326.0 L485.5,339.0 L486.5,344.0 L487.5,345.5 L488.5,343.0 L490.0,342.5 L497.0,348.0 L696.0,504.5 L905.5,504.5 L905.5,468.0 L906.5,468.0 L906.5,423.0" fill="none" stroke="#0000ff" stroke-width="1" stroke-linejoin="round" shape-rendering="crispEdges"/><path d="M64.5,437.5 L120.0,402.0 L232.0,329.0 L401.5,220.5 L402.5,255.0 L404.0,300.0 L405.5,330.0 L407.0,372.0 L409.0,406.0 L410.5,425.0 L412.0,433.5 L414.0,437.0 L416.0,437.5 L906.0,437.5" fill="none" stroke="#ffffff" stroke-width="1" stroke-linejoin="round" shape-rendering="crispEdges"/><path d="M401.5,220.5 L401.5,422.0" fill="none" stroke="#ffffff" stroke-width="1" stroke-linejoin="round" shape-rendering="crispEdges"/></svg>
<div class="t pl" style="left:-45px;width:100px;text-align:right;top:168px;">0.01</div>
<div class="t pl" style="left:-45px;width:100px;text-align:right;top:190px;">0.001</div>
<div class="t pl" style="left:-45px;width:100px;text-align:right;top:211px;">0.0001</div>
<div class="t pl" style="left:-45px;width:100px;text-align:right;top:233px;letter-spacing:0.45px;">1e-005</div>
<div class="t pl" style="left:-45px;width:100px;text-align:right;top:255px;letter-spacing:0.45px;">1e-006</div>
<div class="t pl" style="left:-45px;width:100px;text-align:right;top:277px;letter-spacing:0.45px;">1e-007</div>
<div class="t pl" style="left:-45px;width:100px;text-align:right;top:299px;letter-spacing:0.45px;">1e-008</div>
<div class="t pl" style="left:-45px;width:100px;text-align:right;top:321px;letter-spacing:0.45px;">1e-009</div>
<div class="t pl" style="left:-45px;width:100px;text-align:right;top:342px;letter-spacing:0.45px;">1e-010</div>
<div class="t pl" style="left:-45px;width:100px;text-align:right;top:364px;letter-spacing:0.45px;">1e-011</div>
<div class="t pl" style="left:-45px;width:100px;text-align:right;top:386px;letter-spacing:0.45px;">1e-012</div>
<div class="t pl" style="left:-45px;width:100px;text-align:right;top:408px;letter-spacing:0.45px;">1e-013</div>
<div class="t pl" style="left:-45px;width:100px;text-align:right;top:430px;letter-spacing:0.45px;">1e-014</div>
<div class="t pl" style="left:-45px;width:100px;text-align:right;top:452px;letter-spacing:0.45px;">1e-015</div>
<div class="t pl" style="left:-45px;width:100px;text-align:right;top:473px;letter-spacing:0.45px;">1e-016</div>
<div class="t pl" style="left:-45px;width:100px;text-align:right;top:495px;letter-spacing:0.45px;">1e-017</div>
<div class="t pl" style="left:-45px;width:100px;text-align:right;top:517px;letter-spacing:0.45px;">1e-018</div>
<div class="t pl" style="left:920px;top:146px">2.6A</div>
<div class="t pl" style="left:920px;top:168px">2.4A</div>
<div class="t pl" style="left:920px;top:190px">2.2A</div>
<div class="t pl" style="left:920px;top:211px">2.0A</div>
<div class="t pl" style="left:920px;top:233px">1.8A</div>
<div class="t pl" style="left:920px;top:255px">1.6A</div>
<div class="t pl" style="left:920px;top:277px">1.4A</div>
<div class="t pl" style="left:920px;top:299px">1.2A</div>
<div class="t pl" style="left:920px;top:321px">1.0A</div>
<div class="t pl" style="left:920px;top:342px">0.8A</div>
<div class="t pl" style="left:920px;top:364px">0.6A</div>
<div class="t pl" style="left:920px;top:386px">0.4A</div>
<div class="t pl" style="left:920px;top:408px">0.2A</div>
<div class="t pl" style="left:920px;top:430px">0.0A</div>
<div class="t pl" style="left:915.3px;top:452px">-0.2A</div>
<div class="t pl" style="left:915.3px;top:473px">-0.4A</div>
<div class="t pl" style="left:915.3px;top:495px">-0.6A</div>
<div class="t pl" style="left:915.3px;top:517px">-0.8A</div>
<div class="t pl" style="left:14px;width:101px;text-align:center;top:533px;letter-spacing:0.5px">0µs</div>
<div class="t pl" style="left:98px;width:101px;text-align:center;top:533px;letter-spacing:0.5px">20µs</div>
<div class="t pl" style="left:182px;width:101px;text-align:center;top:533px;letter-spacing:0.5px">40µs</div>
<div class="t pl" style="left:267px;width:101px;text-align:center;top:533px;letter-spacing:0.5px">60µs</div>
<div class="t pl" style="left:351px;width:101px;text-align:center;top:533px;letter-spacing:0.5px">80µs</div>
<div class="t pl" style="left:435px;width:101px;text-align:center;top:533px;letter-spacing:0.5px">100µs</div>
<div class="t pl" style="left:519px;width:101px;text-align:center;top:533px;letter-spacing:0.5px">120µs</div>
<div class="t pl" style="left:603px;width:101px;text-align:center;top:533px;letter-spacing:0.5px">140µs</div>
<div class="t pl" style="left:688px;width:101px;text-align:center;top:533px;letter-spacing:0.5px">160µs</div>
<div class="t pl" style="left:772px;width:101px;text-align:center;top:533px;letter-spacing:0.5px">180µs</div>
<div class="t pl" style="left:856px;width:101px;text-align:center;top:533px;letter-spacing:0.5px">200µs</div>
<div class="t pl" style="left:224px;width:100px;text-align:center;top:136px;color:#0000ff;-webkit-text-stroke-color:#0000ff">V(rx)</div>
<div class="t pl" style="left:646px;width:100px;text-align:center;top:136px;color:#f4f4f4;-webkit-text-stroke-color:#f4f4f4">I(L1)</div>
<svg width="938" height="415" style="left:970px;top:135px;overflow:hidden" viewBox="970 135 938 415"><g shape-rendering="crispEdges" fill="none"><path d="M1106.5,154 V524 M1190.5,154 V524 M1275.5,154 V524 M1359.5,154 V524 M1443.5,154 V524 M1527.5,154 V524 M1611.5,154 V524 M1696.5,154 V524 M1780.5,154 V524 " stroke="#868686" stroke-dasharray="3 3" stroke-dashoffset="-2"/><path d="M1023,175.5 H1864 M1023,197.5 H1864 M1023,218.5 H1864 M1023,240.5 H1864 M1023,262.5 H1864 M1023,284.5 H1864 M1023,306.5 H1864 M1023,328.5 H1864 M1023,349.5 H1864 M1023,371.5 H1864 M1023,393.5 H1864 M1023,415.5 H1864 M1023,437.5 H1864 M1023,459.5 H1864 M1023,480.5 H1864 M1023,502.5 H1864 " stroke="#868686" stroke-dasharray="3 3" stroke-dashoffset="1"/><rect x="1022.5" y="153.5" width="842" height="371" stroke="#d0d0d0"/><path d="M1022.5,524 V532 M1106.5,524 V532 M1190.5,524 V532 M1275.5,524 V532 M1359.5,524 V532 M1443.5,524 V532 M1527.5,524 V532 M1611.5,524 V532 M1696.5,524 V532 M1780.5,524 V532 M1864.5,524 V532 M1864,153.5 H1872 M1864,175.5 H1872 M1015,175.5 H1022 M1864,197.5 H1872 M1015,197.5 H1022 M1864,218.5 H1872 M1015,218.5 H1022 M1864,240.5 H1872 M1015,240.5 H1022 M1864,262.5 H1872 M1015,262.5 H1022 M1864,284.5 H1872 M1015,284.5 H1022 M1864,306.5 H1872 M1015,306.5 H1022 M1864,328.5 H1872 M1015,328.5 H1022 M1864,349.5 H1872 M1015,349.5 H1022 M1864,371.5 H1872 M1015,371.5 H1022 M1864,393.5 H1872 M1015,393.5 H1022 M1864,415.5 H1872 M1015,415.5 H1022 M1864,437.5 H1872 M1015,437.5 H1022 M1864,459.5 H1872 M1015,459.5 H1022 M1864,480.5 H1872 M1015,480.5 H1022 M1864,502.5 H1872 M1015,502.5 H1022 M1864,524.5 H1872 M1015,524.5 H1022 M1019,168.5 H1022 M1019,164.5 H1022 M1019,162.5 H1022 M1019,160.5 H1022 M1019,158.5 H1022 M1019,156.5 H1022 M1019,155.5 H1022 M1019,154.5 H1022 M1019,190.5 H1022 M1019,186.5 H1022 M1019,184.5 H1022 M1019,181.5 H1022 M1019,180.5 H1022 M1019,178.5 H1022 M1019,177.5 H1022 M1019,176.5 H1022 M1019,212.5 H1022 M1019,208.5 H1022 M1019,205.5 H1022 M1019,203.5 H1022 M1019,201.5 H1022 M1019,200.5 H1022 M1019,199.5 H1022 M1019,198.5 H1022 M1019,234.5 H1022 M1019,230.5 H1022 M1019,227.5 H1022 M1019,225.5 H1022 M1019,223.5 H1022 M1019,222.5 H1022 M1019,221.5 H1022 M1019,219.5 H1022 M1019,256.5 H1022 M1019,252.5 H1022 M1019,249.5 H1022 M1019,247.5 H1022 M1019,245.5 H1022 M1019,244.5 H1022 M1019,242.5 H1022 M1019,241.5 H1022 M1019,277.5 H1022 M1019,274.5 H1022 M1019,271.5 H1022 M1019,269.5 H1022 M1019,267.5 H1022 M1019,265.5 H1022 M1019,264.5 H1022 M1019,263.5 H1022 M1019,299.5 H1022 M1019,295.5 H1022 M1019,293.5 H1022 M1019,291.5 H1022 M1019,289.5 H1022 M1019,287.5 H1022 M1019,286.5 H1022 M1019,285.5 H1022 M1019,321.5 H1022 M1019,317.5 H1022 M1019,314.5 H1022 M1019,312.5 H1022 M1019,311.5 H1022 M1019,309.5 H1022 M1019,308.5 H1022 M1019,307.5 H1022 M1019,343.5 H1022 M1019,339.5 H1022 M1019,336.5 H1022 M1019,334.5 H1022 M1019,332.5 H1022 M1019,331.5 H1022 M1019,330.5 H1022 M1019,329.5 H1022 M1019,365.5 H1022 M1019,361.5 H1022 M1019,358.5 H1022 M1019,356.5 H1022 M1019,354.5 H1022 M1019,353.5 H1022 M1019,352.5 H1022 M1019,350.5 H1022 M1019,386.5 H1022 M1019,383.5 H1022 M1019,380.5 H1022 M1019,378.5 H1022 M1019,376.5 H1022 M1019,375.5 H1022 M1019,373.5 H1022 M1019,372.5 H1022 M1019,408.5 H1022 M1019,404.5 H1022 M1019,402.5 H1022 M1019,400.5 H1022 M1019,398.5 H1022 M1019,396.5 H1022 M1019,395.5 H1022 M1019,394.5 H1022 M1019,430.5 H1022 M1019,426.5 H1022 M1019,424.5 H1022 M1019,421.5 H1022 M1019,420.5 H1022 M1019,418.5 H1022 M1019,417.5 H1022 M1019,416.5 H1022 M1019,452.5 H1022 M1019,448.5 H1022 M1019,445.5 H1022 M1019,443.5 H1022 M1019,442.5 H1022 M1019,440.5 H1022 M1019,439.5 H1022 M1019,438.5 H1022 M1019,474.5 H1022 M1019,470.5 H1022 M1019,467.5 H1022 M1019,465.5 H1022 M1019,463.5 H1022 M1019,462.5 H1022 M1019,461.5 H1022 M1019,460.5 H1022 M1019,496.5 H1022 M1019,492.5 H1022 M1019,489.5 H1022 M1019,487.5 H1022 M1019,485.5 H1022 M1019,484.5 H1022 M1019,482.5 H1022 M1019,481.5 H1022 M1019,517.5 H1022 M1019,514.5 H1022 M1019,511.5 H1022 M1019,509.5 H1022 M1019,507.5 H1022 M1019,506.5 H1022 M1019,504.5 H1022 M1019,503.5 H1022 " stroke="#d0d0d0"/></g><path d="M1359.5,524.0 L1359.5,190.0 L1360.5,176.0 L1362.0,169.5 L1363.5,168.0 L1365.0,170.0 L1366.5,175.0 L1367.5,183.0 L1367.5,524.0" fill="none" stroke="#0000ff" stroke-width="1" stroke-linejoin="round" shape-rendering="crispEdges"/><path d="M1382.5,524.0 L1382.5,186.0 L1383.5,176.0 L1385.0,172.0 L1386.5,172.5 L1389.0,177.0 L1395.0,191.0 L1410.0,225.0 L1430.0,268.0 L1443.0,296.0 L1452.0,317.0 L1457.0,330.0 L1460.0,340.0 L1462.0,350.0 L1462.5,357.0 L1462.5,524.0" fill="none" stroke="#0000ff" stroke-width="1" stroke-linejoin="round" shape-rendering="crispEdges"/><path d="M1467.5,354.0 L1467.5,524.5 L1547.0,550.0" fill="none" stroke="#0000ff" stroke-width="1" stroke-linejoin="round" shape-rendering="crispEdges"/><path d="M1022.5,459.5 L1359.5,459.5 L1360.0,459.5 L1360.5,445.5 L1360.9,431.6 L1361.4,417.8 L1361.8,404.2 L1362.3,390.7 L1362.8,377.6 L1363.2,364.8 L1363.7,352.3 L1364.1,340.3 L1364.6,328.7 L1365.1,317.7 L1365.5,307.2 L1366.0,297.3 L1366.4,288.1 L1366.9,279.5 L1367.4,271.6 L1367.8,264.5 L1368.3,258.2 L1368.7,252.6 L1369.2,247.9 L1369.7,244.0 L1370.1,240.9 L1370.6,238.8 L1371.0,237.4 L1371.5,237.0 L1372.0,237.4 L1372.4,238.8 L1372.9,240.9 L1373.3,244.0 L1373.8,247.9 L1374.3,252.6 L1374.7,258.2 L1375.2,264.5 L1375.6,271.6 L1376.1,279.5 L1376.6,288.1 L1377.0,297.3 L1377.5,307.2 L1377.9,317.7 L1378.4,328.7 L1378.9,340.3 L1379.3,352.3 L1379.8,364.8 L1380.2,377.6 L1380.7,390.7 L1381.2,404.2 L1381.6,417.8 L1382.1,431.6 L1382.5,445.5 L1383.0,459.5 L1383.5,455.0 L1384.5,458.0 L1387.0,459.5 L1864.0,459.5" fill="none" stroke="#ffffff" stroke-width="1" stroke-linejoin="round" shape-rendering="crispEdges"/></svg>
<div class="t pl" style="left:913px;width:100px;text-align:right;top:168px;">0.01</div>
<div class="t pl" style="left:913px;width:100px;text-align:right;top:190px;">0.001</div>
<div class="t pl" style="left:913px;width:100px;text-align:right;top:211px;">0.0001</div>
<div class="t pl" style="left:913px;width:100px;text-align:right;top:233px;letter-spacing:0.45px;">1e-005</div>
<div class="t pl" style="left:913px;width:100px;text-align:right;top:255px;letter-spacing:0.45px;">1e-006</div>
<div class="t pl" style="left:913px;width:100px;text-align:right;top:277px;letter-spacing:0.45px;">1e-007</div>
<div class="t pl" style="left:913px;width:100px;text-align:right;top:299px;letter-spacing:0.45px;">1e-008</div>
<div class="t pl" style="left:913px;width:100px;text-align:right;top:321px;letter-spacing:0.45px;">1e-009</div>
<div class="t pl" style="left:913px;width:100px;text-align:right;top:342px;letter-spacing:0.45px;">1e-010</div>
<div class="t pl" style="left:913px;width:100px;text-align:right;top:364px;letter-spacing:0.45px;">1e-011</div>
<div class="t pl" style="left:913px;width:100px;text-align:right;top:386px;letter-spacing:0.45px;">1e-012</div>
<div class="t pl" style="left:913px;width:100px;text-align:right;top:408px;letter-spacing:0.45px;">1e-013</div>
<div class="t pl" style="left:913px;width:100px;text-align:right;top:430px;letter-spacing:0.45px;">1e-014</div>
<div class="t pl" style="left:913px;width:100px;text-align:right;top:452px;letter-spacing:0.45px;">1e-015</div>
<div class="t pl" style="left:913px;width:100px;text-align:right;top:473px;letter-spacing:0.45px;">1e-016</div>
<div class="t pl" style="left:913px;width:100px;text-align:right;top:495px;letter-spacing:0.45px;">1e-017</div>
<div class="t pl" style="left:913px;width:100px;text-align:right;top:517px;letter-spacing:0.45px;">1e-018</div>
<div class="t pl" style="left:1878px;top:146px">2.8A</div>
<div class="t pl" style="left:1878px;top:168px">2.6A</div>
<div class="t pl" style="left:1878px;top:190px">2.4A</div>
<div class="t pl" style="left:1878px;top:211px">2.2A</div>
<div class="t pl" style="left:1878px;top:233px">2.0A</div>
<div class="t pl" style="left:1878px;top:255px">1.8A</div>
<div class="t pl" style="left:1878px;top:277px">1.6A</div>
<div class="t pl" style="left:1878px;top:299px">1.4A</div>
<div class="t pl" style="left:1878px;top:321px">1.2A</div>
<div class="t pl" style="left:1878px;top:342px">1.0A</div>
<div class="t pl" style="left:1878px;top:364px">0.8A</div>
<div class="t pl" style="left:1878px;top:386px">0.6A</div>
<div class="t pl" style="left:1878px;top:408px">0.4A</div>
<div class="t pl" style="left:1878px;top:430px">0.2A</div>
<div class="t pl" style="left:1878px;top:452px">0.0A</div>
<div class="t pl" style="left:1873.3px;top:473px">-0.2A</div>
<div class="t pl" style="left:1873.3px;top:495px">-0.4A</div>
<div class="t pl" style="left:1873.3px;top:517px">-0.6A</div>
<div class="t pl" style="left:972px;width:101px;text-align:center;top:533px;letter-spacing:0.5px">0µs</div>
<div class="t pl" style="left:1056px;width:101px;text-align:center;top:533px;letter-spacing:0.5px">20µs</div>
<div class="t pl" style="left:1140px;width:101px;text-align:center;top:533px;letter-spacing:0.5px">40µs</div>
<div class="t pl" style="left:1225px;width:101px;text-align:center;top:533px;letter-spacing:0.5px">60µs</div>
<div class="t pl" style="left:1309px;width:101px;text-align:center;top:533px;letter-spacing:0.5px">80µs</div>
<div class="t pl" style="left:1393px;width:101px;text-align:center;top:533px;letter-spacing:0.5px">100µs</div>
<div class="t pl" style="left:1477px;width:101px;text-align:center;top:533px;letter-spacing:0.5px">120µs</div>
<div class="t pl" style="left:1561px;width:101px;text-align:center;top:533px;letter-spacing:0.5px">140µs</div>
<div class="t pl" style="left:1646px;width:101px;text-align:center;top:533px;letter-spacing:0.5px">160µs</div>
<div class="t pl" style="left:1730px;width:101px;text-align:center;top:533px;letter-spacing:0.5px">180µs</div>
<div class="t pl" style="left:1814px;width:101px;text-align:center;top:533px;letter-spacing:0.5px">200µs</div>
<div class="t pl" style="left:1182px;width:100px;text-align:center;top:136px;color:#0000ff;-webkit-text-stroke-color:#0000ff">V(rx)</div>
<div class="t pl" style="left:1604px;width:100px;text-align:center;top:136px;color:#f4f4f4;-webkit-text-stroke-color:#f4f4f4">I(L1)</div>
<svg width="938" height="415" style="left:12px;top:593px;overflow:hidden" viewBox="12 593 938 415"><path d="M81.5,707.5 L81.5,715.5 L97.5,723.5 L66.5,738.5 L97.5,753.5 L66.5,768.5 L81.5,776.5 L81.5,784.5 M355.5,738.5 L355.5,745.5 L371.5,753.5 L340.5,768.5 L371.5,784.5 L340.5,799.5 L355.5,806.5 L355.5,814.5 M553.5,707.5 L553.5,715.5 L568.5,723.5 L538.5,738.5 L568.5,753.5 L538.5,768.5 L553.5,776.5 L553.5,784.5 M614.5,841.5 L644.5,841.5 M614.5,818.5 L644.5,818.5 L629.5,841.5 L614.5,818.5 M629.5,799.5 L629.5,818.5 M629.5,841.5 L629.5,860.5 M766.5,925.5 L736.5,925.5 M766.5,947.5 L736.5,947.5 L751.5,925.5 L766.5,947.5 M751.5,967.5 L751.5,947.5 M751.5,925.5 L751.5,906.5 M629.5,906.5 L629.5,913.5 M629.5,974.5 L629.5,982.5 M629.5,928.5 L629.5,947.5 M812.5,814.5 L812.5,833.5 M781.5,833.5 L842.5,833.5 M781.5,856.5 L842.5,856.5 M797.5,841.5 L827.5,841.5 L827.5,848.5 L797.5,848.5 L797.5,841.5 M797.5,864.5 L827.5,864.5 L827.5,871.5 L797.5,871.5 L797.5,864.5 M812.5,871.5 L812.5,890.5 M797.5,818.5 L797.5,826.5 M792.5,822.5 L801.5,822.5 " fill="none" stroke="#000064" stroke-width="1" shape-rendering="crispEdges"/><g fill="none" stroke="#000064" stroke-width="1" shape-rendering="crispEdges"><path d="M173.25,708.25 A15.21,15.21 0 0 1 183.71,734.56 Q172.77,727.31 161.84,734.94 Q172.77,742.56 183.71,735.32 A15.21,15.21 0 0 1 183.71,757.43 Q172.77,750.19 161.84,757.81 Q172.77,765.44 183.71,758.19 A15.21,15.21 0 0 1 173.25,784.50 "/><circle cx="164.69" cy="772.11" r="3.42"/><path d="M447.12,738.75 A15.21,15.21 0 0 1 457.58,765.06 Q446.64,757.81 435.71,765.44 Q446.64,773.06 457.58,765.82 A15.21,15.21 0 0 1 457.58,787.93 Q446.64,780.69 435.71,788.31 Q446.64,795.94 457.58,788.69 A15.21,15.21 0 0 1 447.12,815.00 "/><circle cx="438.56" cy="802.61" r="3.42"/><path d="M447.12,921.75 A15.21,15.21 0 0 1 436.66,895.44 Q447.60,902.69 458.53,895.06 Q447.60,887.44 436.66,894.68 A15.21,15.21 0 0 1 436.66,872.57 Q447.60,879.81 458.53,872.19 Q447.60,864.56 436.66,871.81 A15.21,15.21 0 0 1 447.12,845.50 "/><circle cx="454.54" cy="855.98" r="3.42"/><path d="M629.70,708.25 A15.21,15.21 0 0 1 640.16,734.56 Q629.22,727.31 618.29,734.94 Q629.22,742.56 640.16,735.32 A15.21,15.21 0 0 1 640.16,757.43 Q629.22,750.19 618.29,757.81 Q629.22,765.44 640.16,758.19 A15.21,15.21 0 0 1 629.70,784.50 "/><circle cx="621.14" cy="772.11" r="3.42"/><circle cx="629.5" cy="944.62" r="30.43"/><path d="M625.90,947.5 L634.50,947.5 L629.5,959.88 Z"/></g><path d="M81.5,692.5 L812.5,692.5 M81.5,692.5 L81.5,707.5 M81.5,784.5 L81.5,814.5 L203.5,814.5 M173.5,692.5 L173.5,707.5 M173.5,784.5 L173.5,814.5 M355.5,692.5 L355.5,738.5 M355.5,814.5 L355.5,936.5 L492.5,936.5 M447.5,692.5 L447.5,738.5 M447.5,814.5 L447.5,845.5 M447.5,921.5 L447.5,936.5 M492.5,692.5 L492.5,707.5 M475.5,707.5 L509.5,707.5 L492.5,724.5 L475.5,707.5 M553.5,692.5 L553.5,707.5 M553.5,784.5 L553.5,799.5 L675.5,799.5 M629.5,692.5 L629.5,707.5 M629.5,784.5 L629.5,799.5 M629.5,860.5 L629.5,906.5 M629.5,875.5 L751.5,875.5 L751.5,906.5 M751.5,967.5 L751.5,997.5 M629.5,982.5 L629.5,997.5 L812.5,997.5 L812.5,890.5 M812.5,692.5 L812.5,814.5 " fill="none" stroke="#0000ff" stroke-width="1" shape-rendering="crispEdges"/><g fill="#0000ff" shape-rendering="crispEdges"><rect x="169.0" y="688.0" width="9" height="9"/><rect x="169.0" y="810.0" width="9" height="9"/><rect x="351.0" y="688.0" width="9" height="9"/><rect x="443.0" y="688.0" width="9" height="9"/><rect x="443.0" y="932.0" width="9" height="9"/><rect x="488.0" y="688.0" width="9" height="9"/><rect x="549.0" y="688.0" width="9" height="9"/><rect x="625.0" y="688.0" width="9" height="9"/><rect x="625.0" y="795.0" width="9" height="9"/><rect x="625.0" y="871.0" width="9" height="9"/><rect x="747.0" y="993.0" width="9" height="9"/></g></svg>
<div class="t sch" style="left:476.6px;top:605.4px;font-size:21.6px">K1 L1 L2 .05</div>
<div class="t sch" style="left:476.6px;top:635.9px;font-size:21.6px">K2 L1 L3 .05</div>
<div class="t sch" style="left:111.4px;top:635.9px;font-size:21.6px">K3 L1 L4 .01</div>
<div class="t sch" style="left:309.2px;top:635.9px;font-size:21.6px">K4 L2 L4 .01</div>
<div class="t sch" style="left:100.0px;top:719.8px;font-size:21.6px">R2</div>
<div class="t sch" style="left:100.0px;top:754.1px;font-size:21.6px">1</div>
<div class="t sch" style="left:191.3px;top:719.8px;font-size:21.6px">L4</div>
<div class="t sch" style="left:191.3px;top:757.9px;font-size:21.6px">1µ</div>
<div class="t sch" style="left:373.8px;top:750.3px;font-size:21.6px">R6</div>
<div class="t sch" style="left:373.8px;top:784.6px;font-size:21.6px">2k</div>
<div class="t sch" style="left:465.1px;top:750.3px;font-size:21.6px">L2</div>
<div class="t sch" style="left:465.1px;top:788.4px;font-size:21.6px">300µ</div>
<div class="t sch" style="left:571.6px;top:719.8px;font-size:21.6px">R1</div>
<div class="t sch" style="left:571.6px;top:754.1px;font-size:21.6px">1k</div>
<div class="t sch" style="left:647.7px;top:701.7px;font-size:21.6px">L1</div>
<div class="t sch" style="left:652.5px;top:738.9px;font-size:21.6px">366µ Rser=1 Cpar=90p</div>
<div class="t sch" style="left:675.3px;top:788.4px;font-size:21.6px">Tx</div>
<div class="t sch" style="left:491.8px;top:925.7px;font-size:21.6px">Rx</div>
<div class="t sch" style="left:201.7px;top:803.7px;font-size:21.6px">target</div>
<div class="t sch" style="left:651.5px;top:894.2px;font-size:21.6px">I1</div>
<div class="t sch" style="left:835.1px;top:803.7px;font-size:21.6px">V1</div>
<div class="t sch" style="left:835.1px;top:887.6px;font-size:21.6px">20</div>
<div class="t sch" style="left:27.2px;width:400px;text-align:right;top:848.5px;font-size:21.6px">L3</div>
<div class="t sch" style="left:27.2px;width:400px;text-align:right;top:887.6px;font-size:21.6px">300µ</div>
<div class="t sch" style="left:42.9px;top:963.8px;font-size:21.6px">.tran 0 200u 0</div>
<div class="t sch" style="left:648.7px;top:817.0px;font-size:21.6px">D1</div>
<div class="t sch" style="left:636.3px;top:848.5px;font-size:21.6px">MUR460</div>
<div class="t sch" style="left:716.2px;top:894.2px;font-size:21.6px">D2</div>
<div class="t sch" style="left:731.4px;top:956.2px;font-size:21.6px">RF071L4S</div>
<div class="t sch" style="left:296.8px;top:967.6px;font-size:21.6px">PULSE(0 2 0u 80u 0 .1u 1m 1)</div>
<svg width="938" height="415" style="left:970px;top:593px;overflow:hidden" viewBox="970 593 938 415"><path d="M1036.5,708.5 L1036.5,716.5 L1051.5,724.5 L1020.5,739.5 L1051.5,754.5 L1020.5,770.5 L1036.5,777.5 L1036.5,785.5 M1312.5,739.5 L1312.5,747.5 L1328.5,754.5 L1297.5,770.5 L1328.5,785.5 L1297.5,801.5 L1312.5,808.5 L1312.5,816.5 M1512.5,708.5 L1512.5,716.5 L1527.5,724.5 L1497.5,739.5 L1527.5,754.5 L1497.5,770.5 L1512.5,777.5 L1512.5,785.5 M1589.5,908.5 L1589.5,916.5 M1589.5,977.5 L1589.5,985.5 M1589.5,931.5 L1589.5,950.5 M1773.5,816.5 L1773.5,835.5 M1742.5,835.5 L1804.5,835.5 M1742.5,858.5 L1804.5,858.5 M1758.5,843.5 L1788.5,843.5 L1788.5,850.5 L1758.5,850.5 L1758.5,843.5 M1758.5,866.5 L1788.5,866.5 L1788.5,873.5 L1758.5,873.5 L1758.5,866.5 M1773.5,873.5 L1773.5,893.5 M1758.5,820.5 L1758.5,828.5 M1753.5,824.5 L1763.5,824.5 " fill="none" stroke="#000064" stroke-width="1" shape-rendering="crispEdges"/><g fill="none" stroke="#000064" stroke-width="1" shape-rendering="crispEdges"><path d="M1128.50,709.36 A15.36,15.36 0 0 1 1139.06,735.86 Q1128.02,728.56 1116.98,736.24 Q1128.02,743.92 1139.06,736.62 A15.36,15.36 0 0 1 1139.06,758.90 Q1128.02,751.60 1116.98,759.28 Q1128.02,766.96 1139.06,759.66 A15.36,15.36 0 0 1 1128.50,786.16 "/><circle cx="1119.86" cy="773.68" r="3.46"/><path d="M1404.98,740.08 A15.36,15.36 0 0 1 1415.54,766.58 Q1404.50,759.28 1393.46,766.96 Q1404.50,774.64 1415.54,767.34 A15.36,15.36 0 0 1 1415.54,789.62 Q1404.50,782.32 1393.46,790.00 Q1404.50,797.68 1415.54,790.38 A15.36,15.36 0 0 1 1404.98,816.88 "/><circle cx="1396.34" cy="804.40" r="3.46"/><path d="M1404.98,924.40 A15.36,15.36 0 0 1 1394.42,897.90 Q1405.46,905.20 1416.50,897.52 Q1405.46,889.84 1394.42,897.14 A15.36,15.36 0 0 1 1394.42,874.86 Q1405.46,882.16 1416.50,874.48 Q1405.46,866.80 1394.42,874.10 A15.36,15.36 0 0 1 1404.98,847.60 "/><circle cx="1412.47" cy="858.16" r="3.46"/><path d="M1589.30,709.36 A15.36,15.36 0 0 1 1599.86,735.86 Q1588.82,728.56 1577.78,736.24 Q1588.82,743.92 1599.86,736.62 A15.36,15.36 0 0 1 1599.86,758.90 Q1588.82,751.60 1577.78,759.28 Q1588.82,766.96 1599.86,759.66 A15.36,15.36 0 0 1 1589.30,786.16 "/><circle cx="1580.66" cy="773.68" r="3.46"/><circle cx="1589.5" cy="947.44" r="30.72"/><path d="M1585.46,950.5 L1594.14,950.5 L1589.5,962.80 Z"/></g><path d="M1036.5,693.5 L1773.5,693.5 M1036.5,693.5 L1036.5,708.5 M1036.5,785.5 L1036.5,816.5 L1159.5,816.5 M1128.5,693.5 L1128.5,708.5 M1128.5,785.5 L1128.5,816.5 M1312.5,693.5 L1312.5,739.5 M1312.5,816.5 L1312.5,939.5 L1451.5,939.5 M1404.5,693.5 L1404.5,739.5 M1404.5,816.5 L1404.5,847.5 M1404.5,923.5 L1404.5,939.5 M1451.5,693.5 L1451.5,708.5 M1433.5,708.5 L1468.5,708.5 L1451.5,726.5 L1433.5,708.5 M1512.5,693.5 L1512.5,708.5 M1512.5,785.5 L1512.5,801.5 L1635.5,801.5 M1589.5,693.5 L1589.5,708.5 M1589.5,785.5 L1589.5,801.5 M1589.5,801.5 L1589.5,908.5 M1589.5,985.5 L1589.5,1000.5 L1773.5,1000.5 L1773.5,893.5 M1773.5,693.5 L1773.5,816.5 " fill="none" stroke="#0000ff" stroke-width="1" shape-rendering="crispEdges"/><g fill="#0000ff" shape-rendering="crispEdges"><rect x="1124.0" y="689.0" width="9" height="9"/><rect x="1124.0" y="812.0" width="9" height="9"/><rect x="1308.0" y="689.0" width="9" height="9"/><rect x="1400.0" y="689.0" width="9" height="9"/><rect x="1400.0" y="935.0" width="9" height="9"/><rect x="1447.0" y="689.0" width="9" height="9"/><rect x="1508.0" y="689.0" width="9" height="9"/><rect x="1585.0" y="689.0" width="9" height="9"/><rect x="1585.0" y="797.0" width="9" height="9"/></g></svg>
<div class="t sch" style="left:1434.7px;top:605.5px;font-size:21.6px">K1 L1 L2 .05</div>
<div class="t sch" style="left:1434.7px;top:636.2px;font-size:21.6px">K2 L1 L3 .05</div>
<div class="t sch" style="left:1066.1px;top:636.2px;font-size:21.6px">K3 L1 L4 .01</div>
<div class="t sch" style="left:1265.7px;top:636.2px;font-size:21.6px">K4 L2 L4 .01</div>
<div class="t sch" style="left:1054.5px;top:720.7px;font-size:21.6px">R2</div>
<div class="t sch" style="left:1054.5px;top:755.3px;font-size:21.6px">1</div>
<div class="t sch" style="left:1146.7px;top:720.7px;font-size:21.6px">L4</div>
<div class="t sch" style="left:1146.7px;top:759.1px;font-size:21.6px">1µ</div>
<div class="t sch" style="left:1331.0px;top:751.4px;font-size:21.6px">R6</div>
<div class="t sch" style="left:1331.0px;top:786.0px;font-size:21.6px">2k</div>
<div class="t sch" style="left:1423.2px;top:751.4px;font-size:21.6px">L2</div>
<div class="t sch" style="left:1423.2px;top:789.8px;font-size:21.6px">300µ</div>
<div class="t sch" style="left:1530.7px;top:720.7px;font-size:21.6px">R1</div>
<div class="t sch" style="left:1530.7px;top:755.3px;font-size:21.6px">1k</div>
<div class="t sch" style="left:1607.5px;top:702.5px;font-size:21.6px">L1</div>
<div class="t sch" style="left:1612.3px;top:739.9px;font-size:21.6px">366µ Rser=1 Cpar=90p</div>
<div class="t sch" style="left:1635.3px;top:789.8px;font-size:21.6px">Tx</div>
<div class="t sch" style="left:1450.1px;top:928.1px;font-size:21.6px">Rx</div>
<div class="t sch" style="left:1157.3px;top:805.2px;font-size:21.6px">target</div>
<div class="t sch" style="left:1611.3px;top:896.4px;font-size:21.6px">I1</div>
<div class="t sch" style="left:1796.6px;top:805.2px;font-size:21.6px">V1</div>
<div class="t sch" style="left:1796.6px;top:889.7px;font-size:21.6px">300</div>
<div class="t sch" style="left:984.8px;width:400px;text-align:right;top:850.3px;font-size:21.6px">L3</div>
<div class="t sch" style="left:984.8px;width:400px;text-align:right;top:889.7px;font-size:21.6px">300µ</div>
<div class="t sch" style="left:996.9px;top:966.5px;font-size:21.6px">.tran 0 200u 0</div>
<div class="t sch" style="left:1253.3px;top:970.3px;font-size:21.6px">SINE(0 2.1 100000 80u 0 0 .5)</div>
</body></html>
